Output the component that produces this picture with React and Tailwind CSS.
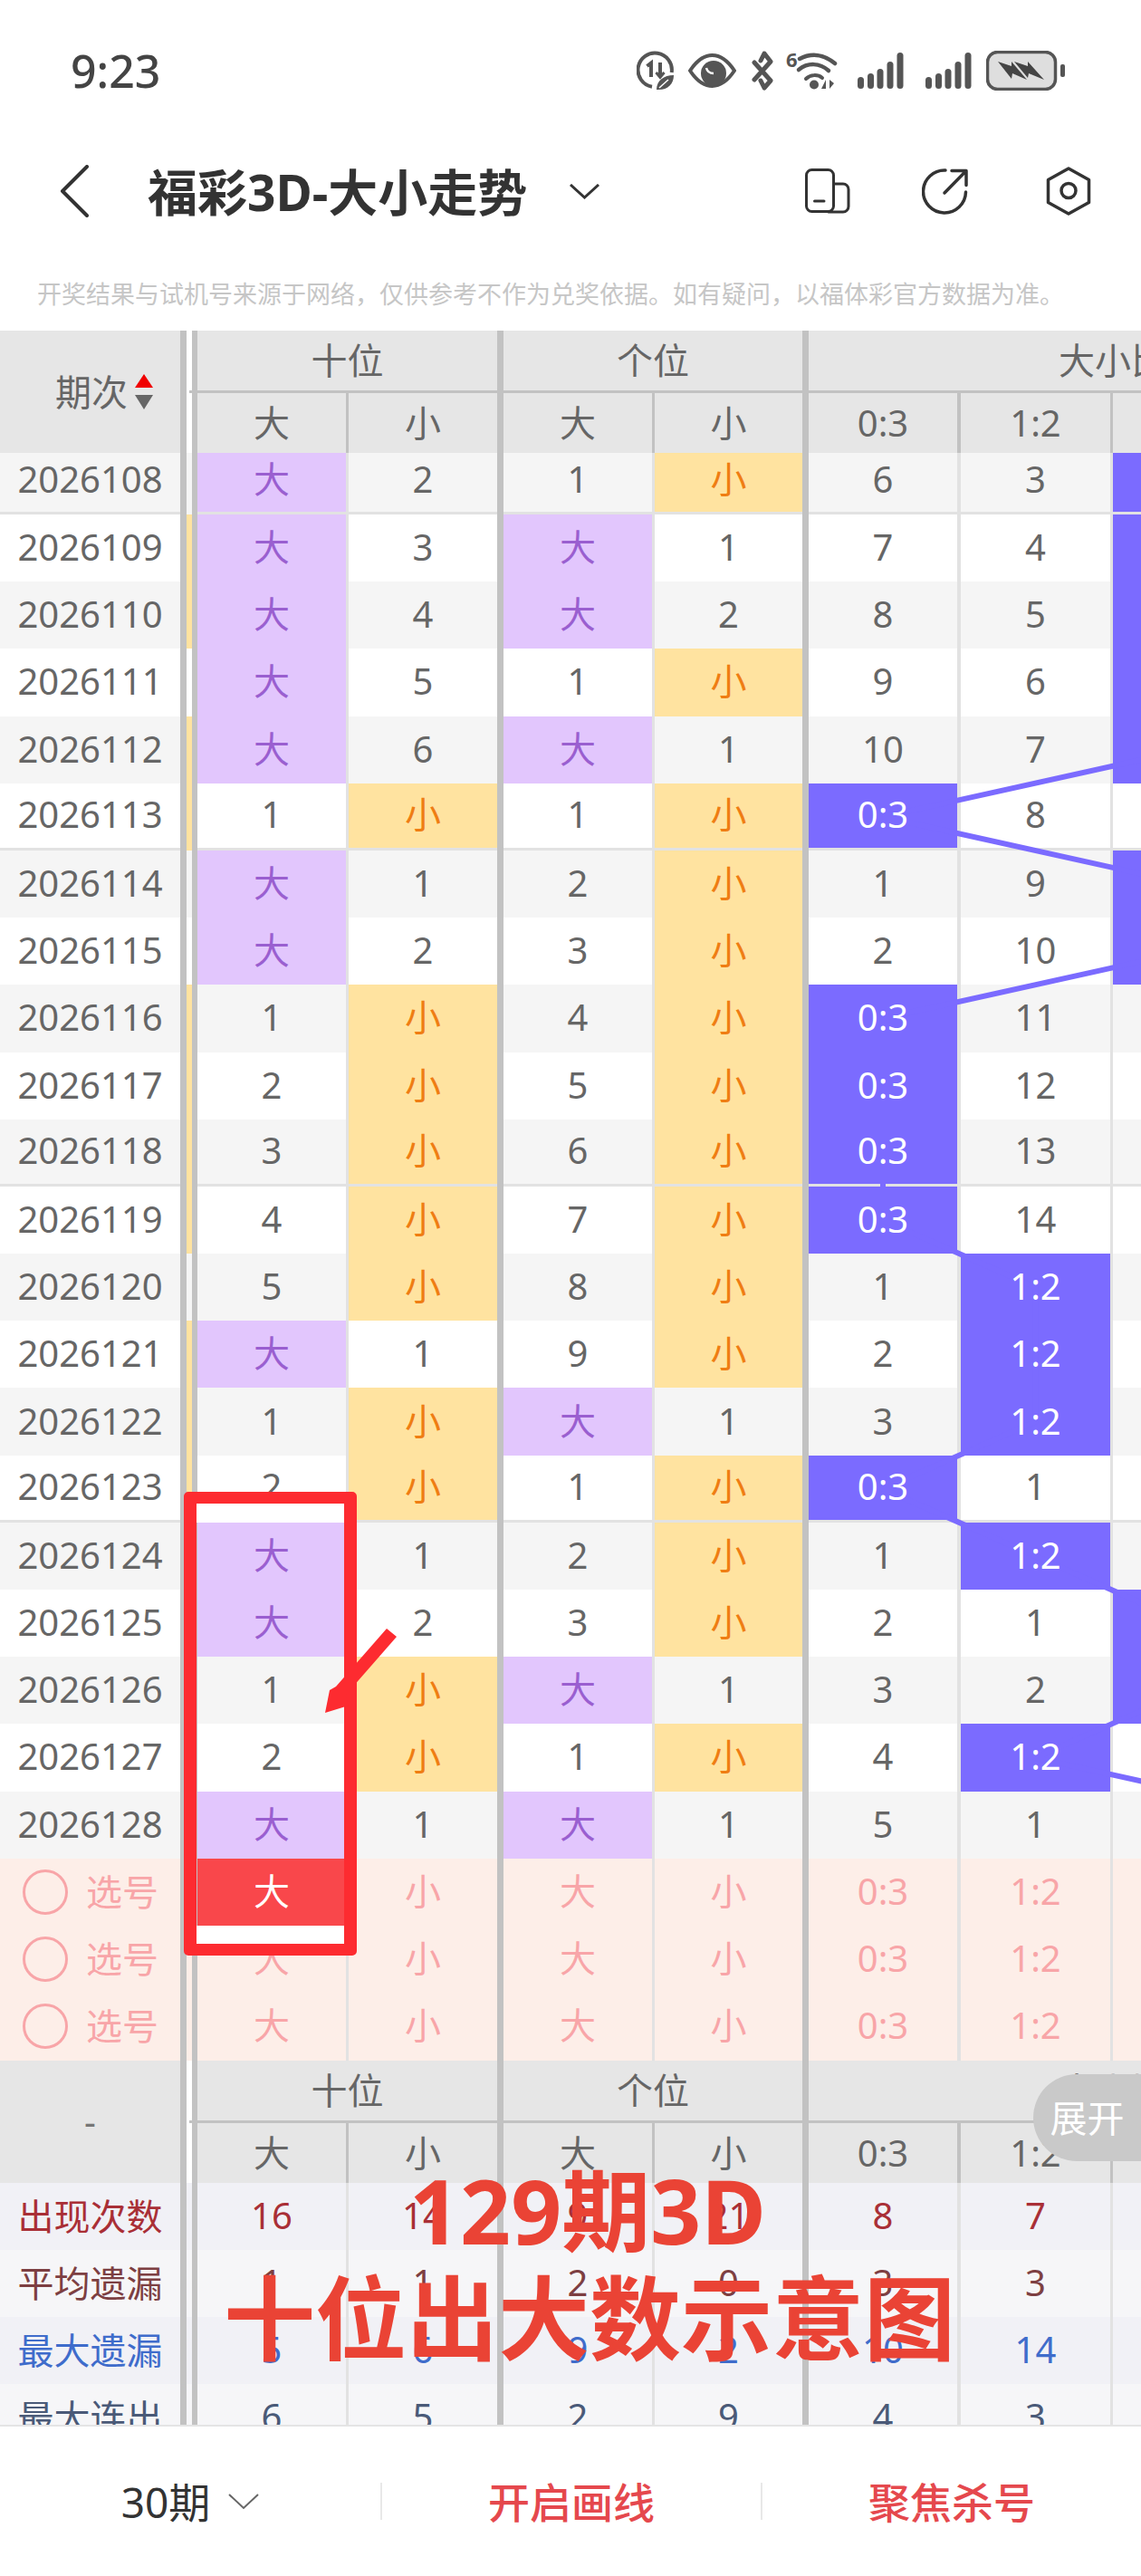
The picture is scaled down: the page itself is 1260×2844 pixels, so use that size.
import React from "react";

const bodyCols = [
  "w-[167px] border-r-[3px] border-[#e2e2e2]",
  "w-[171px] border-r-[7px] border-[#c2c2c2]",
  "w-[167px] border-r-[3px] border-[#e2e2e2]",
  "w-[170px] border-r-[7px] border-[#c2c2c2]",
  "w-[168px] border-r-[4px] border-[#e2e2e2]",
  "w-[168px] border-r-[3px] border-[#e2e2e2]",
  "w-[168px]",
];

const headCols = [
  "w-[167px] border-r-[3px] border-[#c2c2c2]",
  "w-[171px] border-r-[7px] border-[#c2c2c2]",
  "w-[167px] border-r-[3px] border-[#c2c2c2]",
  "w-[170px] border-r-[7px] border-[#c2c2c2]",
  "w-[168px] border-r-[4px] border-[#c2c2c2]",
  "w-[168px] border-r-[3px] border-[#c2c2c2]",
  "w-[168px]",
];

// period, ten big, ten small, one big, one small, 0:3, 1:2, highlighted ratio column
const rows = [
  [2026108, "大", 2, 1, "小", 6, 3, 2],
  [2026109, "大", 3, "大", 1, 7, 4, 2],
  [2026110, "大", 4, "大", 2, 8, 5, 2],
  [2026111, "大", 5, 1, "小", 9, 6, 2],
  [2026112, "大", 6, "大", 1, 10, 7, 2],
  [2026113, 1, "小", 1, "小", "0:3", 8, 0],
  [2026114, "大", 1, 2, "小", 1, 9, 2],
  [2026115, "大", 2, 3, "小", 2, 10, 2],
  [2026116, 1, "小", 4, "小", "0:3", 11, 0],
  [2026117, 2, "小", 5, "小", "0:3", 12, 0],
  [2026118, 3, "小", 6, "小", "0:3", 13, 0],
  [2026119, 4, "小", 7, "小", "0:3", 14, 0],
  [2026120, 5, "小", 8, "小", 1, "1:2", 1],
  [2026121, "大", 1, 9, "小", 2, "1:2", 1],
  [2026122, 1, "小", "大", 1, 3, "1:2", 1],
  [2026123, 2, "小", 1, "小", "0:3", 1, 0],
  [2026124, "大", 1, 2, "小", 1, "1:2", 1],
  [2026125, "大", 2, 3, "小", 2, 1, 2],
  [2026126, 1, "小", "大", 1, 3, 2, 2],
  [2026127, 2, "小", 1, "小", 4, "1:2", 1],
  [2026128, "大", 1, "大", 1, 5, 1, 3],
];

const yellowStrip = [2026109, 2026110, 2026112, 2026113, 2026116, 2026117, 2026118, 2026119, 2026121, 2026122, 2026123];
const sepAfter = [2026108, 2026113, 2026118, 2026123];

const stats = [
  { label: "出现次数", vals: [16, 14, 9, 21, 8, 7], color: "text-[#a92f36]", bg: "bg-[#f1f1f6]" },
  { label: "平均遗漏", vals: [1, 1, 2, 0, 3, 3], color: "text-[#7d3f42]", bg: "bg-[#f6f6f8]" },
  { label: "最大遗漏", vals: [5, 6, 9, 2, 10, 14], color: "text-[#3f6ccb]", bg: "bg-[#f1f1f6]" },
  { label: "最大连出", vals: [6, 5, 2, 9, 4, 3], color: "text-[#4a5a78]", bg: "bg-[#f6f6f8]" },
];

const ratioX = [975, 1143.5, 1311, 1479];
const chartPoints = rows
  .map((r, i) => `${ratioX[r[7]]},${i === 0 ? 165 : 203 + 74.2 * (i - 1) + 37}`)
  .join(" ");

function Divider({ w = "w-[7px]" }) {
  return <div className={`${w} shrink-0 bg-[#c2c2c2]`} />;
}

function Cell({ col, tone = "", sep, pad, children }) {
  return (
    <div className={`${col} shrink-0 flex flex-col`}>
      <div className={`flex-1 flex items-center justify-center ${tone} ${sep ? "border-b-[3px] border-[#e2e2e2]" : ""} ${pad ? "pb-[6px]" : ""}`}>
        <span className="relative z-20 pb-[2px]">{children}</span>
      </div>
    </div>
  );
}

function RowShell({ h, bg, strip, sep, pad, label, labelClass = "justify-center", children }) {
  return (
    <div className={`flex ${h} ${bg} shrink-0`}>
      <div className={`w-[199px] shrink-0 flex items-center ${labelClass} ${sep ? "border-b-[3px] border-[#e2e2e2]" : ""} ${pad ? "pb-[6px]" : ""}`}>
        {label}
      </div>
      <Divider />
      <div className={`w-[6px] shrink-0 ${strip || ""}`} />
      <Divider w="w-[6px]" />
      <div className="flex flex-1 min-w-0 overflow-hidden">{children}</div>
    </div>
  );
}

function GroupHeader({ label }) {
  const subs = ["大", "小", "大", "小", "0:3", "1:2", ""];
  return (
    <div className="flex h-[135px] shrink-0">
      <div className="w-[199px] shrink-0 bg-[#e6e6e6] flex items-center">{label}</div>
      <Divider />
      <div className="w-[6px] shrink-0 flex flex-col">
        <div className="h-[66px]" />
        <div className="h-[3px] w-[3px] ml-auto bg-[#c2c2c2]" />
      </div>
      <Divider w="w-[6px]" />
      <div className="flex-1 min-w-0 overflow-hidden flex flex-col bg-[#e6e6e6]">
        <div className="flex h-[66px]">
          <div className="w-[338px] shrink-0 border-r-[7px] border-[#c2c2c2] flex items-center justify-center">十位</div>
          <div className="w-[337px] shrink-0 border-r-[7px] border-[#c2c2c2] flex items-center justify-center">个位</div>
          <div className="w-[672px] shrink-0 flex items-center justify-center">大小比</div>
        </div>
        <div className="h-[3px] w-full bg-[#c2c2c2]" />
        <div className="flex h-[66px]">
          {subs.map((s, i) => (
            <div key={i} className={`${headCols[i]} shrink-0 flex items-center justify-center`}>{s}</div>
          ))}
        </div>
      </div>
    </div>
  );
}

function toneFor(v) {
  if (v === "大") return "bg-[#e2c6fd] text-[#9a5fd0]";
  if (v === "小") return "bg-[#ffe3a0] text-[#ef7d13]";
  return "";
}

function DataRow({ row, index }) {
  const [period, a, b, c, d, r0, r1, hl] = row;
  const sep = sepAfter.includes(period);
  const pad = index === 0;
  const bg = index % 2 === 0 ? "bg-[#f5f5f5]" : "bg-white";
  const chart = "bg-[#7b6bff] text-white";
  return (
    <RowShell
      h={index === 0 ? "h-[68px]" : "h-[74.2px]"}
      bg={bg}
      sep={sep}
      pad={pad}
      strip={yellowStrip.includes(period) ? "bg-[#ffe3a0]" : ""}
      label={<span className="pb-[2px]">{period}</span>}
    >
      {[a, b, c, d].map((v, i) => (
        <Cell key={i} col={bodyCols[i]} tone={toneFor(v)} sep={sep} pad={pad}>{v}</Cell>
      ))}
      <Cell col={bodyCols[4]} tone={hl === 0 ? chart : ""} sep={sep} pad={pad}>{r0}</Cell>
      <Cell col={bodyCols[5]} tone={hl === 1 ? chart : ""} sep={sep} pad={pad}>{r1}</Cell>
      <Cell col={bodyCols[6]} tone={hl === 2 ? chart : ""} sep={sep} pad={pad} />
    </RowShell>
  );
}

function PickRow({ selected }) {
  const vals = ["大", "小", "大", "小", "0:3", "1:2"];
  return (
    <RowShell
      h="h-[74.3px]"
      bg="bg-[#fdeee8] text-[#f8a5a8]"
      labelClass="pl-[25px] gap-[20px] text-[40px]"
      label={
        <>
          <span className="w-[50px] h-[50px] rounded-full border-[3px] border-[#f8a5a8]" />
          <span>选号</span>
        </>
      }
    >
      {vals.map((v, i) => (
        <Cell key={i} col={bodyCols[i]} tone={selected && i === 0 ? "bg-[#f9474b] text-white" : ""}>{v}</Cell>
      ))}
    </RowShell>
  );
}

function StatRow({ stat }) {
  return (
    <RowShell h="h-[74px]" bg={`${stat.bg} ${stat.color}`} label={<span className="text-[40px]">{stat.label}</span>}>
      {stat.vals.map((v, i) => (
        <Cell key={i} col={bodyCols[i]}>{v}</Cell>
      ))}
    </RowShell>
  );
}

function SortArrows() {
  return (
    <svg width="20" height="39" viewBox="0 0 20 39" className="ml-[8px]">
      <path d="M10 0 L20 15 H0Z" fill="#f00000" />
      <path d="M0 23 H20 L10 39Z" fill="#666" />
    </svg>
  );
}

function DataSaverIcon() {
  return (
    <svg width="41" height="44" viewBox="0 0 41 44" fill="none" stroke="#555">
      <path d="M38.7 24 A18.7 18.7 0 1 0 17 39.7" strokeWidth="4" />
      <path d="M11.5 17 L16 13.5 V29" strokeWidth="4" />
      <path d="M26 13 V29" strokeWidth="4" />
      <path d="M21.5 24 L26 29.5 L30.5 24" strokeWidth="3" />
      <path d="M22 43 C22 33 30 27 41 27 C41 37 34 44 22 43Z" fill="#555" stroke="none" />
      <path d="M25 41 L35 32" stroke="#fff" strokeWidth="1.5" />
    </svg>
  );
}

function EyeIcon() {
  return (
    <svg width="53" height="44" viewBox="0 0 53 44" fill="none">
      <path d="M2 22 C10 10 18 5 26.5 5 C35 5 43 10 51 22 C43 34 35 39 26.5 39 C18 39 10 34 2 22Z" stroke="#555" strokeWidth="4" />
      <circle cx="28" cy="25" r="14" fill="#555" />
      <path d="M20 19 C21 23 24 25 28 25" stroke="#fff" strokeWidth="2.5" />
    </svg>
  );
}

function BluetoothIcon() {
  return (
    <svg width="25" height="44" viewBox="0 0 25 44" fill="none" stroke="#555" strokeWidth="5" strokeLinecap="round" strokeLinejoin="round">
      <path d="M3 13 L21 33 L14 41 L10 33 M10 11 L14 3 L21 12 L3 32" />
    </svg>
  );
}

function WifiIcon() {
  return (
    <svg width="57" height="44" viewBox="0 0 57 44" fill="none" stroke="#555" strokeLinecap="round">
      <text x="0" y="18" fontSize="22" fontWeight="700" fill="#555" stroke="none">6</text>
      <path d="M15 9 C28 2 42 4 54 14" strokeWidth="4.5" />
      <path d="M14 21 C24 13 37 13 47 22" strokeWidth="4.5" />
      <path d="M22 31 C27 26 35 26 40 30" strokeWidth="4" />
      <circle cx="31" cy="37.5" r="5" fill="#555" stroke="none" />
      <path d="M44 32 V42 L39 42Z M48 32 V42 L53 36Z" fill="#555" stroke="none" />
    </svg>
  );
}

function SignalIcon() {
  const bars = [[0, 29], [11, 25], [21.5, 20], [32.5, 12], [43.5, 2]];
  return (
    <svg width="51" height="44" viewBox="0 0 51 44" fill="#555">
      {bars.map(([x, y]) => (
        <rect key={x} x={x} y={y} width="7" height={42 - y} rx="3.5" />
      ))}
    </svg>
  );
}

function BatteryIcon() {
  return (
    <svg width="87" height="44" viewBox="0 0 87 44">
      <rect x="1.5" y="1.5" width="75" height="41" rx="11" fill="#dedede" stroke="#555" strokeWidth="3.5" />
      <rect x="82" y="15" width="5" height="14" rx="2" fill="#555" />
      <path d="M13 12 L28 17 L28 12 L45 32 L29 25 L28 31Z" fill="#444" />
      <path d="M31 12 L46 17 L46 12 L64 32 L47 25 L46 30Z" fill="#444" />
    </svg>
  );
}

function StatusBar() {
  return (
    <div className="h-[130px] flex items-start pt-[56px] pl-[78px]">
      <span className="text-[50px] leading-[44px] font-medium text-[#444]">9:23</span>
      <div className="ml-auto mr-[84px] flex items-center">
        <DataSaverIcon />
        <div className="ml-[16px]"><EyeIcon /></div>
        <div className="ml-[17px]"><BluetoothIcon /></div>
        <div className="ml-[13px]"><WifiIcon /></div>
        <div className="ml-[22px]"><SignalIcon /></div>
        <div className="ml-[24px]"><SignalIcon /></div>
        <div className="ml-[16px]"><BatteryIcon /></div>
      </div>
    </div>
  );
}

function NavBar() {
  return (
    <div className="h-[162px] flex items-center pl-[66px] text-[#333]">
      <svg width="32" height="58" viewBox="0 0 32 58" fill="none" stroke="#333" strokeWidth="4" strokeLinecap="round" strokeLinejoin="round">
        <path d="M30 2 L3 29 L30 56" />
      </svg>
      <span className="ml-[65px] text-[55px] leading-none font-bold">福彩3D-大小走势</span>
      <svg width="33" height="17" viewBox="0 0 33 17" fill="none" stroke="#333" strokeWidth="3" className="ml-[47px]">
        <path d="M1 1 L16.5 15 L32 1" />
      </svg>
      <svg width="50" height="50" viewBox="0 0 50 50" fill="none" stroke="#333" strokeWidth="3" strokeLinecap="round" className="ml-[227px]">
        <rect x="1.5" y="1.5" width="30" height="46" rx="6" />
        <path d="M32 17 H42 A6 6 0 0 1 48 23 V42 A6 6 0 0 1 42 48 H26" />
        <path d="M10.5 36 H21" />
      </svg>
      <svg width="52" height="52" viewBox="0 0 52 52" fill="none" stroke="#333" strokeWidth="3.5" strokeLinecap="round" strokeLinejoin="round" className="ml-[79px]">
        <path d="M26 3 A23.5 23.5 0 1 0 48.5 27" />
        <path d="M25 28 L48.5 4 M33 3.5 H49 V19.5" />
      </svg>
      <svg width="50" height="54" viewBox="0 0 50 54" fill="none" stroke="#333" strokeWidth="3.5" strokeLinejoin="round" className="ml-[85px]">
        <path d="M25 2 L47.5 14.5 V39.5 L25 52 L2.5 39.5 V14.5Z" />
        <circle cx="25" cy="26.5" r="8" />
      </svg>
    </div>
  );
}

function Table() {
  return (
    <div className="relative h-[2312px] overflow-hidden flex flex-col text-[40px] leading-none text-[#666]">
      <GroupHeader
        label={
          <div className="flex items-center pl-[61px]">
            <span>期次</span>
            <SortArrows />
          </div>
        }
      />
      {rows.map((row, i) => (
        <DataRow key={row[0]} row={row} index={i} />
      ))}
      <PickRow selected />
      <PickRow />
      <PickRow />
      <GroupHeader label={<span className="w-full text-center text-[#777]">-</span>} />
      {stats.map((s) => (
        <StatRow key={s.label} stat={s} />
      ))}
      <svg className="absolute left-0 top-0 z-10 pointer-events-none" width="1260" height="2312" fill="none">
        <polyline points={chartPoints} stroke="#7b6bff" strokeWidth="6" />
      </svg>
    </div>
  );
}

function BottomBar() {
  return (
    <div className="h-[167px] border-t-2 border-[#e4e4e4] grid grid-cols-3 items-center text-[46px] leading-none bg-white">
      <div className="flex items-center justify-center text-[#333]">
        <span>30期</span>
        <svg width="34" height="18" viewBox="0 0 34 18" fill="none" stroke="#666" strokeWidth="2" className="ml-[20px]">
          <path d="M1 1 L17 16 L33 1" />
        </svg>
      </div>
      <div className="h-[41px] border-l-2 border-[#e8e8e8] flex items-center justify-center font-medium text-[#e5484d]">开启画线</div>
      <div className="h-[41px] border-l-2 border-[#e8e8e8] flex items-center justify-center font-medium text-[#e5484d]">聚焦杀号</div>
    </div>
  );
}

export default function App() {
  return (
    <div className="relative w-[1260px] h-[2844px] overflow-hidden bg-white font-['Noto_Sans','Noto_Sans_CJK_SC',sans-serif]">
      <StatusBar />
      <NavBar />
      <div className="h-[73px] pt-[13px] pl-[41px] text-[27px] leading-[40px] text-[#c6c6c6]">
        开奖结果与试机号来源于网络，仅供参考不作为兑奖依据。如有疑问，以福体彩官方数据为准。
      </div>
      <Table />
      <BottomBar />

      {/* red marks painted on the screenshot */}
      <div className="absolute left-[203px] top-[1647px] w-[191px] h-[512px] border-x-[14px] border-y-[13px] border-[#fd2b30] rounded-[5px] flex flex-col justify-between z-30">
        <div className="h-[21px] bg-white" />
        <div className="h-[20px] bg-white" />
      </div>
      <svg className="absolute left-[350px] top-[1790px] z-30" width="100" height="110" viewBox="0 0 100 110">
        <polygon points="77,8 88,17 32,81 35,93 9,101 14,76 21,72" fill="#fd2b30" />
      </svg>
      <div className="absolute left-[1141px] top-[2290px] w-[119px] h-[96px] rounded-l-[48px] bg-[#c9c9c9] flex items-center justify-center text-white text-[41px] leading-none z-30">
        展开
      </div>
      <div className="absolute left-[247px] top-[2381px] w-[804px] text-center leading-[119px] font-bold text-[#ea4335] z-30">
        <div className="text-[98px]">129期3D</div>
        <div className="text-[101px] whitespace-nowrap">十位出大数示意图</div>
      </div>
    </div>
  );
}
